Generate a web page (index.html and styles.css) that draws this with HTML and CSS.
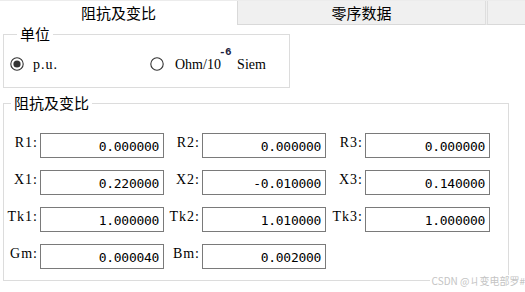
FILE: index.html
```html
<!DOCTYPE html>
<html>
<head>
<meta charset="utf-8">
<link rel="stylesheet" href="styles.css">
</head>
<body>
<div class="page">
  <div class="tabs">
    <div class="tab active">阻抗及变比</div>
    <div class="tab">零序数据</div>
    <div class="tab rest"></div>
  </div>

  <fieldset class="group unit">
    <legend>单位</legend>
    <div class="radios">
      <label class="radio first">
        <svg class="rb" width="14" height="14" viewBox="0 0 14 14"><circle cx="7" cy="7" r="6.2" fill="#fff" stroke="#333" stroke-width="1.1"/><circle cx="7" cy="7" r="3.6" fill="#333"/></svg>
        <span class="rtext pu">p.u.</span>
      </label>
      <label class="radio">
        <svg class="rb" width="14" height="14" viewBox="0 0 14 14"><circle cx="7" cy="7" r="6.2" fill="#fff" stroke="#333" stroke-width="1.1"/></svg>
        <span class="rtext">Ohm/10<span class="exp">-6</span>Siem</span>
      </label>
    </div>
  </fieldset>

  <fieldset class="group imp">
    <legend>阻抗及变比</legend>
    <div class="grid">
      <span class="lbl">R1:</span><span class="val">0.000000</span>
      <span class="lbl">R2:</span><span class="val">0.000000</span>
      <span class="lbl">R3:</span><span class="val">0.000000</span>

      <span class="lbl">X1:</span><span class="val">0.220000</span>
      <span class="lbl">X2:</span><span class="val">-0.010000</span>
      <span class="lbl">X3:</span><span class="val">0.140000</span>

      <span class="lbl">Tk1:</span><span class="val">1.000000</span>
      <span class="lbl">Tk2:</span><span class="val">1.010000</span>
      <span class="lbl">Tk3:</span><span class="val">1.000000</span>

      <span class="lbl">Gm:</span><span class="val">0.000040</span>
      <span class="lbl">Bm:</span><span class="val">0.002000</span>
    </div>
  </fieldset>

  <div class="watermark">CSDN @ㄐ变电部罗#</div>
</div>
</body>
</html>
```

FILE: styles.css
```css
html, body {
  margin: 0;
  padding: 0;
  background: #fff;
}

.page {
  position: relative;
  width: 525px;
  height: 292px;
  overflow: hidden;
  font-family: "Noto Sans CJK SC", "Noto Sans", sans-serif;
  color: #000;
}

.tabs {
  display: flex;
  height: 25px;
  border-top: 1px solid #ececec;
  box-sizing: border-box;
}

.tab {
  box-sizing: border-box;
  height: 24px;
  display: flex;
  align-items: center;
  justify-content: center;
  font-size: 15px;
  line-height: 16px;
  background: #f0f0f0;
  border-left: 1px solid #d9d9d9;
  border-bottom: 1px solid #d9d9d9;
}

.tab.active {
  width: 237px;
  background: #fff;
  border: none;
  height: 25px;
  padding-bottom: 1px;
}

.tab:nth-child(2) {
  width: 248px;
}

.tab.rest {
  flex: 1;
  border-left: 3px double #dedede;
}

.group {
  box-sizing: border-box;
  margin: 0 0 0 3px;
  padding: 0;
  border: 1px solid #dcdcdc;
  min-width: 0;
}

.group legend {
  font-size: 15px;
  line-height: 16px;
  padding: 0 3px;
  margin-left: 7px;
}

.unit {
  width: 287px;
  margin-top: 1px;
  padding: 0 0 13px 6px;
}

.radios {
  display: flex;
  align-items: center;
  height: 20px;
  margin-top: 12px;
}

.radio {
  display: flex;
  align-items: center;
  gap: 9px;
}

.radio.first {
  width: 140px;
}

.rb {
  display: block;
  flex: none;
}

.radio:not(.first) .rb {
  margin-right: 2px;
}

.rtext {
  font-family: "Liberation Serif", "DejaVu Serif", serif;
  font-size: 14px;
  line-height: 16px;
  white-space: pre;
  padding-top: 1px;
}

.rtext.pu {
  letter-spacing: 1px;
}

.exp {
  position: relative;
  top: -14px;
  font-family: "Liberation Mono", monospace;
  font-size: 11px;
  font-weight: bold;
  letter-spacing: -0.5px;
  line-height: 0;
  color: #1c1c40;
  margin: 0 6px 0 -2px;
}

.imp {
  width: 506px;
  margin-top: 7px;
  padding: 0 0 11px 0;
}

.grid {
  display: grid;
  grid-template-columns: 34px 124px 34px 124px 35px 125px;
  grid-auto-rows: 25px;
  column-gap: 2px;
  row-gap: 12px;
  margin-top: 22px;
}

.lbl {
  font-family: "Liberation Serif", "DejaVu Serif", serif;
  font-size: 14px;
  letter-spacing: 1px;
  line-height: 16px;
  text-align: right;
  white-space: nowrap;
  padding-top: 2px;
}

.val {
  box-sizing: border-box;
  border: 1px solid #7a7a7a;
  background: #fff;
  font-family: "DejaVu Sans Mono", monospace;
  font-size: 13px;
  letter-spacing: -0.3px;
  line-height: 23px;
  text-align: right;
  padding-right: 4px;
  padding-top: 1px;
  white-space: nowrap;
}

.watermark {
  position: absolute;
  right: 0;
  bottom: 6px;
  background: #fff;
  color: #c4c4c4;
  font-size: 10px;
  line-height: 11px;
  padding-left: 2px;
  font-family: "Noto Sans CJK SC", "Noto Sans", sans-serif;
}
```
